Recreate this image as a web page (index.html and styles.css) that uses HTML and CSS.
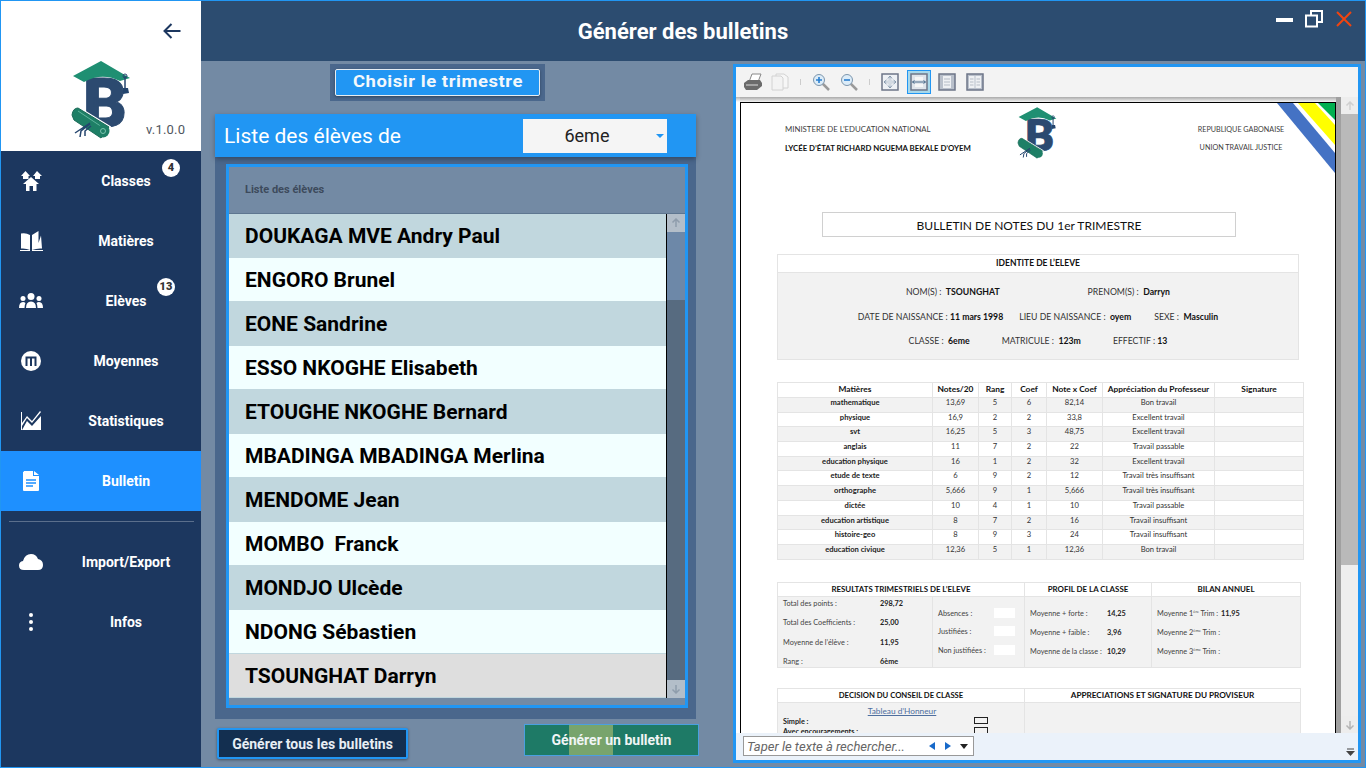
FILE: index.html
```html
<!DOCTYPE html>
<html>
<head>
  <title>Générer des bulletins</title>
  <meta charset="utf-8">
  <link rel="stylesheet" href="styles.css">
</head>
<body>
  <div class="app">
    <aside class="sidebar">
      <div class="brand">
        <svg class="back" width="18" height="16" viewBox="0 0 18 16"><path d="M17.5 8 H2 M8.500 1 L1.500 8 L8.500 15" fill="none" stroke="#1c375f" stroke-width="2"/></svg>
        <div class="brand-row">
          <svg class="brand-logo" width="80" height="90" viewBox="0 0 80 90">
            <text x="23" y="72" class="logo-b">B</text>
            <path d="M41 6 L13 21 L24 27 Q42 17 60 26 L70 23 Z" fill="#1f8f72"/>
            <path d="M65 21 V33" stroke="#24456e" stroke-width="1.5"/>
            <circle cx="65" cy="21" r="2" fill="none" stroke="#24456e"/>
            <path d="M63 33 H68 L69 38 L63 39 Z" fill="#24456e"/>
            <path d="M12 60 Q13 53 18 53 L49 72 L41 83 L14 65 Z" fill="#fff" stroke="#fff" stroke-width="3"/>
            <path d="M12 60 Q13 53 18 53 L49 72 L41 83 L14 65 Z" fill="#1e7f66" stroke="#1a6a58"/>
            <path d="M18 56 L42 72" stroke="#5fb59c"/>
            <circle cx="43" cy="76" r="6.500" fill="#1e7f66"/>
            <circle cx="43" cy="76" r="2.500" fill="none" stroke="#7cc4ae"/>
            <path d="M30 68 L15 78 M30 69 L21 76 L20 82 M31 71 L25 76 L25 81" stroke="#24456e" stroke-width="1.5" fill="none"/>
          </svg>
          <span class="version">v.1.0.0</span>
        </div>
      </div>

      <nav class="menu">
        <a class="menu-item">
          <svg class="icon" width="26" height="22" viewBox="0 0 26 22"><path d="M7.500 1 L12 6 H10.500 V9 H5 V6 H3 Z M19 1 L24 6 H22 V9 H17 V6 H15 Z M13 7 L21 14 H18.500 V21 H15 V16 H11.500 V21 H8 V14 H5 Z" fill="#fff"/></svg>
          <span>Classes</span><b class="badge badge-one">4</b>
        </a>
        <a class="menu-item">
          <svg class="icon" width="26" height="22" viewBox="0 0 26 22"><path d="M3 3.500 Q8 2.500 12 5 V20 Q8 18 3 18.500 Z M14 5 L20.500 1 V13 L23 5.500 L24 18.500 Q19 18 14 20 Z M2 20 H12 V21 H2 Z M14 20 H25 V21 H14 Z" fill="#fff"/></svg>
          <span>Matières</span>
        </a>
        <a class="menu-item">
          <svg class="icon" width="26" height="16" viewBox="0 0 26 16"><circle cx="13" cy="3.500" r="3.500" fill="#fff"/><circle cx="5" cy="5.500" r="2.500" fill="#fff"/><circle cx="21" cy="5.500" r="2.500" fill="#fff"/><path d="M8 15 Q8 8.500 13 8.500 Q18 8.500 18 15 Z M1 15 Q1 9 5 9 Q6.500 9 7.500 10 Q6.500 12 6.500 15 Z M25 15 Q25 9 21 9 Q19.500 9 18.500 10 Q19.500 12 19.500 15 Z" fill="#fff"/></svg>
          <span>Elèves</span><b class="badge badge-two">13</b>
        </a>
        <a class="menu-item">
          <svg class="icon" width="26" height="22" viewBox="0 0 26 22"><circle cx="13" cy="11" r="10" fill="#fff"/><path d="M8.500 16 V7.500 H17.500 V16 M13 8 V16" fill="none" stroke="#1c375f" stroke-width="2"/></svg>
          <span>Moyennes</span>
        </a>
        <a class="menu-item">
          <svg class="icon" width="26" height="22" viewBox="0 0 26 22"><path d="M3 20 V2 H4 V13 L9 6 L14 11 L22 1 L23 2 L14 13 L9 8 L4 16 V20 Z" fill="#fff"/><path d="M4 20 L9 11 L14 16 L23 6 V20 Z" fill="#fff"/></svg>
          <span>Statistiques</span>
        </a>
        <a class="menu-item is-active">
          <svg class="icon" width="26" height="22" viewBox="0 0 26 22"><path d="M6 2 Q5 1 6 1 H15 V6 H21 V20 Q21 21 20 21 H6 Q5 21 5 20 V2 Z M16 1 L21 5 H16 Z" fill="#fff"/><path d="M8 10 H18 M8 13 H18 M8 16 H15" stroke="#1e90ff" stroke-width="1.600"/></svg>
          <span>Bulletin</span>
        </a>
      </nav>

      <hr class="menu-sep">

      <nav class="menu">
        <a class="menu-item">
          <svg class="icon" width="26" height="18" viewBox="0 0 26 18"><path d="M6 17 Q1 17 1 12.500 Q1 8.500 5 8 Q7 1 13 1 Q18 1 20 6 Q25 7 25 12 Q25 17 20 17 Z" fill="#fff"/></svg>
          <span>Import/Export</span>
        </a>
        <a class="menu-item">
          <svg class="icon" width="26" height="22" viewBox="0 0 26 22"><circle cx="13" cy="4" r="2" fill="#fff"/><circle cx="13" cy="11" r="2" fill="#fff"/><circle cx="13" cy="18" r="2" fill="#fff"/></svg>
          <span>Infos</span>
        </a>
      </nav>
    </aside>

    <div class="main">
      <header class="topbar">
        <h1>Générer des bulletins</h1>
        <div class="win-controls">
          <svg width="17" height="4"><rect width="17" height="4" fill="#fff"/></svg>
          <svg width="18" height="18" viewBox="0 0 18 18"><path d="M6 5 V1 H17 V12 H12.500" fill="none" stroke="#fff" stroke-width="2"/><rect x="1" y="5.500" width="11" height="11" fill="none" stroke="#fff" stroke-width="2"/></svg>
          <svg width="16" height="16" viewBox="0 0 16 16"><path d="M1 1 L15 15 M15 1 L1 15" stroke="#f0440f" stroke-width="2"/></svg>
        </div>
      </header>

      <div class="content">
        <section class="students">
          <div class="term-wrap"><button class="term-btn"><span>Choisir le trimestre</span></button></div>

          <div class="list-head">
            <span>Liste des élèves de</span>
            <div class="class-select">6eme<i class="caret"></i></div>
          </div>

          <div class="list-panel">
            <div class="list-box">
              <div class="list-title">Liste des élèves</div>
              <div class="list-body">
                <ul class="rows">
                  <li>DOUKAGA MVE Andry Paul</li>
                  <li>ENGORO Brunel</li>
                  <li>EONE Sandrine</li>
                  <li>ESSO NKOGHE Elisabeth</li>
                  <li>ETOUGHE NKOGHE Bernard</li>
                  <li>MBADINGA MBADINGA Merlina</li>
                  <li>MENDOME Jean</li>
                  <li>MOMBO&nbsp; Franck</li>
                  <li>MONDJO Ulcède</li>
                  <li>NDONG Sébastien</li>
                  <li class="is-selected">TSOUNGHAT Darryn</li>
                </ul>
                <div class="list-scroll">
                  <div class="scroll-btn"><svg width="10" height="10" viewBox="0 0 10 10"><path d="M5 9 V1 M1.500 4.500 L5 1 L8.500 4.500" fill="none" stroke="#8f9dac" stroke-width="1.500"/></svg></div>
                  <div class="list-thumb"></div>
                  <div class="list-track"></div>
                  <div class="scroll-btn"><svg width="10" height="10" viewBox="0 0 10 10"><path d="M5 1 V9 M1.500 5.500 L5 9 L8.500 5.500" fill="none" stroke="#8f9dac" stroke-width="1.500"/></svg></div>
                </div>
              </div>
            </div>
          </div>

          <div class="actions">
            <button class="btn-all">Générer tous les bulletins</button>
            <button class="btn-one">Générer un bulletin</button>
          </div>
        </section>

        <section class="viewer">
          <div class="toolbar">
            <svg class="tool t-print" width="20" height="18" viewBox="0 0 20 18"><path d="M9 1 L18 1 L15 9 H6 Z" fill="#fff" stroke="#888"/><path d="M1 10 L5 7 H17 L19 10 V13 L14 17 H3 L1 14 Z" fill="#6b6b6b"/><path d="M3 12 H15" stroke="#ddd"/></svg>
            <svg class="tool t-copy" width="18" height="18" viewBox="0 0 18 18"><path d="M5 1 H13 L17 4 V15 H5 Z" fill="#f6f6f6" stroke="#d2d2d2"/><path d="M1 3 H10 L12 5 V17 H1 Z" fill="#f3f3f3" stroke="#d2d2d2"/></svg>
            <i class="tool-sep"></i>
            <svg class="tool t-zoomin" width="18" height="18" viewBox="0 0 18 18"><path d="M10 10 L17 17" stroke="#9a9a9a" stroke-width="2.500"/><circle cx="7" cy="7" r="5.500" fill="#dcecf8" stroke="#7d96ad"/><path d="M4 7 H10 M7 4 V10" stroke="#2a7fd0" stroke-width="1.600"/></svg>
            <svg class="tool t-zoomout" width="18" height="18" viewBox="0 0 18 18"><path d="M10 10 L17 17" stroke="#9a9a9a" stroke-width="2.500"/><circle cx="7" cy="7" r="5.500" fill="#dcecf8" stroke="#7d96ad"/><path d="M4 7 H10" stroke="#2a7fd0" stroke-width="1.600"/></svg>
            <i class="tool-sep"></i>
            <svg class="tool t-fit" width="18" height="18" viewBox="0 0 18 18"><rect x="1" y="1" width="16" height="16" fill="#eef1f5" stroke="#6d7588" stroke-width="1.500"/><path d="M9 3.500 V14.500 M3.500 9 H14.500" stroke="#a9b8c8"/><path d="M7 5.500 L9 3 L11 5.500 M7 12.500 L9 15 L11 12.500 M5.500 7 L3 9 L5.500 11 M12.500 7 L15 9 L12.500 11" fill="none" stroke="#7f93a8"/><rect x="6.500" y="6.500" width="5" height="5" fill="#d3dae2"/></svg>
            <span class="tool-on"><svg width="18" height="18" viewBox="0 0 18 18"><rect x="1" y="1" width="16" height="16" fill="#dfe4ea" stroke="#6d7588" stroke-width="1.500"/><path d="M5 5.500 H13 M5 12.500 H13" stroke="#f6f6f6" stroke-width="3"/><path d="M2.500 9 H15.500 M4.500 7.500 L2.500 9 L4.500 10.500 M13.500 7.500 L15.500 9 L13.500 10.500" fill="none" stroke="#4a6a8a"/></svg></span>
            <svg class="tool t-page" width="18" height="18" viewBox="0 0 18 18"><rect x="1" y="1" width="16" height="16" fill="#b9c0cb" stroke="#6d7588" stroke-width="1.500"/><rect x="5" y="3" width="8" height="12" fill="#eef0f3"/><path d="M6 6 H12 M6 9 H12 M6 12 H12" stroke="#b5bcc6"/></svg>
            <svg class="tool t-two" width="18" height="18" viewBox="0 0 18 18"><rect x="1" y="1" width="16" height="16" fill="#b9c0cb" stroke="#6d7588" stroke-width="1.500"/><rect x="3" y="3" width="5.500" height="12" fill="#eef0f3"/><rect x="9.500" y="3" width="5.500" height="12" fill="#eef0f3"/><path d="M4 6 H7.500 M4 9 H7.500 M4 12 H7.500 M10.500 6 H14 M10.500 9 H14 M10.500 12 H14" stroke="#b5bcc6"/></svg>
          </div>

          <div class="doc-area">
            <div class="doc-gutter"></div>
            <div class="page">
              <svg class="flag" width="59" height="70" viewBox="0 0 59 70"><path d="M1 0 H17 L59 50 V70 Z" fill="#4472c4"/><path d="M22 0 H39 L59 22 V42 Z" fill="#ffff00"/><path d="M42 0 H59 V17 Z" fill="#00b050"/></svg>

              <div class="doc-head">
                <div class="head-left">
                  <p>MINISTERE DE L’EDUCATION NATIONAL</p>
                  <p class="strong">LYCÉE D’ÉTAT RICHARD NGUEMA BEKALE D’OYEM</p>
                </div>
                <svg class="head-logo" width="53" height="60" viewBox="0 0 80 90">
                  <text x="23" y="72" class="logo-b">B</text>
                  <path d="M41 6 L13 21 L24 27 Q42 17 60 26 L70 23 Z" fill="#1f8f72"/>
                  <path d="M65 21 V33" stroke="#24456e" stroke-width="1.5"/>
                  <circle cx="65" cy="21" r="2" fill="none" stroke="#24456e"/>
                  <path d="M63 33 H68 L69 38 L63 39 Z" fill="#24456e"/>
                  <path d="M12 60 Q13 53 18 53 L49 72 L41 83 L14 65 Z" fill="#fff" stroke="#fff" stroke-width="3"/>
                  <path d="M12 60 Q13 53 18 53 L49 72 L41 83 L14 65 Z" fill="#1e7f66" stroke="#1a6a58"/>
                  <circle cx="43" cy="76" r="6.500" fill="#1e7f66"/>
                  <path d="M30 68 L15 78 M30 69 L21 76 L20 82 M31 71 L25 76 L25 81" stroke="#24456e" stroke-width="1.5" fill="none"/>
                </svg>
                <div class="head-right">
                  <p>REPUBLIQUE GABONAISE</p>
                  <p>UNION TRAVAIL JUSTICE</p>
                </div>
              </div>

              <div class="doc-title">BULLETIN DE NOTES DU 1er TRIMESTRE</div>

              <div class="identity">
                <div class="sheet-head">IDENTITE DE L’ELEVE</div>
                <div class="identity-body">
                  <div class="id-row gap-a"><span>NOM(S) :&nbsp; <b>TSOUNGHAT</b></span><span>PRENOM(S) :&nbsp; <b>Darryn</b></span></div>
                  <div class="id-row gap-b"><span>DATE DE NAISSANCE : <b>11 mars 1998</b></span><span>LIEU DE NAISSANCE :&nbsp; <b>oyem</b></span><span>SEXE :&nbsp; <b>Masculin</b></span></div>
                  <div class="id-row gap-c"><span>CLASSE :&nbsp; <b>6eme</b></span><span>MATRICULE :&nbsp; <b>123m</b></span><span>EFFECTIF : <b>13</b></span></div>
                </div>
              </div>

              <table class="marks">
                <colgroup><col class="c1"><col class="c2"><col class="c3"><col class="c4"><col class="c5"><col class="c6"><col class="c7"></colgroup>
                <tr><th>Matières</th><th>Notes/20</th><th>Rang</th><th>Coef</th><th>Note x Coef</th><th>Appréciation du Professeur</th><th>Signature</th></tr>
                <tr><td class="subject">mathematique</td><td>13,69</td><td>5</td><td>6</td><td>82,14</td><td>Bon travail</td><td></td></tr>
                <tr><td class="subject">physique</td><td>16,9</td><td>2</td><td>2</td><td>33,8</td><td>Excellent travail</td><td></td></tr>
                <tr><td class="subject">svt</td><td>16,25</td><td>5</td><td>3</td><td>48,75</td><td>Excellent travail</td><td></td></tr>
                <tr><td class="subject">anglais</td><td>11</td><td>7</td><td>2</td><td>22</td><td>Travail passable</td><td></td></tr>
                <tr><td class="subject">education physique</td><td>16</td><td>1</td><td>2</td><td>32</td><td>Excellent travail</td><td></td></tr>
                <tr><td class="subject">etude de texte</td><td>6</td><td>9</td><td>2</td><td>12</td><td>Travail très insuffisant</td><td></td></tr>
                <tr><td class="subject">orthographe</td><td>5,666</td><td>9</td><td>1</td><td>5,666</td><td>Travail très insuffisant</td><td></td></tr>
                <tr><td class="subject">dictée</td><td>10</td><td>4</td><td>1</td><td>10</td><td>Travail passable</td><td></td></tr>
                <tr><td class="subject">education artistique</td><td>8</td><td>7</td><td>2</td><td>16</td><td>Travail insuffisant</td><td></td></tr>
                <tr><td class="subject">histoire-geo</td><td>8</td><td>9</td><td>3</td><td>24</td><td>Travail insuffisant</td><td></td></tr>
                <tr><td class="subject">education civique</td><td>12,36</td><td>5</td><td>1</td><td>12,36</td><td>Bon travail</td><td></td></tr>
              </table>

              <div class="results">
                <div class="res-head span-2">RESULTATS TRIMESTRIELS DE L’ELEVE</div>
                <div class="res-head">PROFIL DE LA CLASSE</div>
                <div class="res-head">BILAN ANNUEL</div>
                <div class="res-cell points">
                  <div class="kv"><span>Total des points :</span><b>298,72</b></div>
                  <div class="kv"><span>Total des Coefficients :</span><b>25,00</b></div>
                  <div class="kv"><span>Moyenne de l’élève :</span><b>11,95</b></div>
                  <div class="kv"><span>Rang :</span><b>6ème</b></div>
                </div>
                <div class="res-cell absences">
                  <div class="abs"><span>Absences :</span><i></i></div>
                  <div class="abs"><span>Justifiées :</span><i></i></div>
                  <div class="abs"><span>Non justifiées :</span><i></i></div>
                </div>
                <div class="res-cell profile">
                  <div class="kv"><span>Moyenne + forte :</span><b>14,25</b></div>
                  <div class="kv"><span>Moyenne + faible :</span><b>3,96</b></div>
                  <div class="kv"><span>Moyenne de la classe :</span><b>10,29</b></div>
                </div>
                <div class="res-cell annual">
                  <div class="kv"><span>Moyenne 1<sup>ère</sup> Trim :</span><b>11,95</b></div>
                  <div class="kv"><span>Moyenne 2<sup>ème</sup> Trim :</span></div>
                  <div class="kv"><span>Moyenne 3<sup>ème</sup> Trim :</span></div>
                </div>
              </div>

              <div class="decision">
                <div class="res-head">DECISION DU CONSEIL DE CLASSE</div>
                <div class="res-head">APPRECIATIONS ET SIGNATURE DU PROVISEUR</div>
                <div class="res-cell dec-left">
                  <div class="honour">Tableau d’Honneur</div>
                  <div class="dec-row"><b>Simple :</b><i></i></div>
                  <div class="dec-row"><b>Avec encouragements :</b><i></i></div>
                </div>
                <div class="res-cell"></div>
              </div>
            </div>
            <div class="doc-shadow"></div>
            <div class="doc-scroll">
              <div class="doc-scroll-btn"><svg width="10" height="10" viewBox="0 0 10 10"><path d="M5 9 V1 M1.500 4.500 L5 1 L8.500 4.500" fill="none" stroke="#cfcfcf" stroke-width="1.500"/></svg></div>
              <div class="doc-thumb"></div>
              <div class="doc-track"></div>
              <div class="doc-scroll-btn"><svg width="10" height="10" viewBox="0 0 10 10"><path d="M5 1 V9 M1.500 5.500 L5 9 L8.500 5.500" fill="none" stroke="#b5b5b5" stroke-width="1.500"/></svg></div>
            </div>
          </div>

          <div class="searchbar">
            <div class="search">
              <span class="search-text">Taper le texte à rechercher...</span>
              <i class="tri tri-left"></i>
              <i class="tri tri-right"></i>
              <i class="tri tri-down"></i>
            </div>
            <svg class="search-more" width="9" height="8" viewBox="0 0 9 8"><path d="M1 1 H8" stroke="#444"/><path d="M0 3 H9 L4.500 8 Z" fill="#444"/></svg>
          </div>
        </section>
      </div>
    </div>
  </div>
</body>
</html>
```

FILE: styles.css
```css
* {
  box-sizing: border-box;
}
html, body {
  margin: 0;
  height: 100%;
  overflow: hidden;
}
body {
  font-family: Roboto, sans-serif;
}
p, ul, h1 {
  margin: 0;
  padding: 0;
}
button {
  font-family: Roboto, sans-serif;
  padding: 0;
  cursor: pointer;
}
.logo-b {
  font-family: Roboto, sans-serif;
  font-weight: 900;
  font-size: 68px;
  fill: #2c4a70;
  stroke: #2c4a70;
  stroke-width: 1;
}

.app {
  display: flex;
  width: 1366px;
  height: 768px;
  border: 1px solid #2196f3;
  background-color: #738aa4;
}

/* sidebar */
.sidebar {
  width: 200px;
  flex: none;
  background-color: #1c375f;
}
.brand {
  height: 150px;
  background-color: white;
  padding-top: 22px;
  display: flex;
  flex-direction: column;
}
.back {
  flex: none;
  align-self: flex-end;
  margin-right: 20px;
}
.brand-row {
  display: flex;
  flex: none;
  margin-top: 16px;
  padding-left: 59px;
  height: 90px;
}
.brand-logo {
  flex: none;
}
.version {
  font-size: 13px;
  letter-spacing: 0.2px;
  color: #50565e;
  margin-left: 6px;
  margin-top: 67px;
}
.menu-item {
  position: relative;
  display: flex;
  align-items: center;
  height: 60px;
  color: white;
  font-size: 14px;
  font-weight: 700;
}
.menu-item .icon {
  flex: none;
  margin-left: 17px;
  margin-right: 7px;
  width: 26px;
}
.menu-item span {
  width: 150px;
  text-align: center;
}
.is-active {
  background-color: #1e90ff;
}
.badge {
  position: absolute;
  width: 18px;
  height: 18px;
  border-radius: 50%;
  background-color: white;
  color: #333;
  font-size: 11px;
  line-height: 18px;
  text-align: center;
}
.badge-one {
  left: 161px;
  top: 8px;
}
.badge-two {
  left: 156px;
  top: 7px;
}
.menu-sep {
  border: none;
  border-top: 1px solid #5b6f8c;
  margin: 10px 7px 10px 8px;
}

/* top bar */
.main {
  flex: 1;
  display: flex;
  flex-direction: column;
  min-width: 0;
}
.topbar {
  height: 60px;
  flex: none;
  display: flex;
  background-color: #2c4c70;
}
.topbar h1 {
  width: 964px;
  color: white;
  font-size: 22px;
  font-weight: 700;
  text-align: center;
  line-height: 61px;
}
.win-controls {
  display: flex;
  align-items: flex-start;
  margin-left: 111px;
}
.win-controls svg:nth-child(1) {
  margin-top: 17px;
}
.win-controls svg:nth-child(2) {
  margin-top: 9px;
  margin-left: 12px;
}
.win-controls svg:nth-child(3) {
  margin-top: 10px;
  margin-left: 13px;
}

/* left part */
.content {
  flex: 1;
  display: flex;
  min-height: 0;
}
.students {
  width: 481px;
  margin-left: 14px;
  flex: none;
}
.term-wrap {
  width: 215px;
  height: 37px;
  margin: 3px 0 13px 115px;
  padding: 5px;
  background-color: #4a678c;
}
.term-btn {
  display: block;
  width: 100%;
  height: 100%;
  padding-bottom: 2px;
  background-color: #2196f3;
  border: 1px solid #e6edf3;
  border-radius: 2px;
  color: #f4f8fb;
  font-size: 16px;
  font-weight: 700;
  letter-spacing: 0.5px;
  box-shadow: 0 1px 3px rgba(0,0,0,0.35);
}
.term-btn span {
  display: inline-block;
  transform: scaleX(1.15);
}
.list-head {
  position: relative;
  display: flex;
  align-items: center;
  height: 43px;
  padding-left: 9px;
  background-color: #2196f3;
  color: white;
  font-size: 21px;
  box-shadow: 0 2px 5px rgba(0,0,0,0.3);
}
.class-select {
  position: relative;
  margin-left: 122px;
  width: 144px;
  height: 34px;
  background-color: #f5f5f5;
  color: #222;
  font-size: 18px;
  line-height: 33px;
  text-align: center;
  padding-right: 16px;
}
.caret {
  position: absolute;
  right: 3px;
  top: 15px;
  border: 4px solid transparent;
  border-top: 4px solid #2196f3;
}
.list-panel {
  height: 562px;
  padding: 7px 8px 0 11px;
  background-color: #4a678c;
}
.list-box {
  height: 544px;
  border: 3px solid #2196f3;
  background-color: #738aa4;
}
.list-title {
  height: 47px;
  padding: 16px 0 0 16px;
  font-size: 11px;
  font-weight: 700;
  color: #3d4a5c;
  border-bottom: 1px solid #5e7690;
}
.list-body {
  display: flex;
  height: 484px;
}
.rows {
  width: 438px;
  list-style: none;
  border-right: 1px solid black;
}
.rows li {
  height: 44px;
  padding-left: 16px;
  line-height: 44px;
  font-size: 21px;
  font-weight: 700;
  color: black;
  background-color: #f2ffff;
  border-bottom: 1px solid #c1d7de;
}
.rows li:nth-child(odd) {
  background-color: #c1d7de;
}
.rows li.is-selected {
  background-color: #dedede;
}
.list-scroll {
  width: 18px;
  display: flex;
  flex-direction: column;
}
.scroll-btn {
  height: 18px;
  flex: none;
  display: flex;
  align-items: center;
  justify-content: center;
  background-color: #b3bec9;
}
.list-thumb {
  height: 68px;
  background-color: #6d88a8;
}
.list-track {
  flex: 1;
  background-color: #576b80;
}
.actions {
  display: flex;
  justify-content: space-between;
  align-items: flex-start;
  margin: 0 -3px 0 2px;
}
.btn-all {
  width: 191px;
  height: 31px;
  margin-top: 9px;
  background-color: #132f50;
  border: 2px solid #2196f3;
  border-radius: 2px;
  color: #e8eef4;
  font-size: 14px;
  font-weight: 700;
  box-shadow: 0 1px 3px rgba(0,0,0,0.4);
}
.btn-one {
  width: 175px;
  height: 32px;
  margin-top: 5px;
  background: linear-gradient(to right, #1e7a66 44px, #78a46c 44px, #78a46c 88px, #1e7a66 88px);
  border: 1px solid #4aa0e0;
  color: #f0f5f5;
  font-size: 14px;
  font-weight: 700;
}

/* viewer */
.viewer {
  width: 628px;
  height: 699px;
  margin: 3px 0 0 37px;
  flex: none;
  display: flex;
  flex-direction: column;
  border: 3px solid #2196f3;
  background-color: #ebf2fa;
}
.toolbar {
  height: 30px;
  flex: none;
  display: flex;
  align-items: center;
  background-color: #f3f3f3;
}
.tool {
  flex: none;
}
.t-print { margin-left: 7px; margin-top: 0; }
.t-copy { margin-left: 8px; }
.tool-sep {
  width: 1px;
  height: 6px;
  background-color: #ccc;
}
.t-copy + .tool-sep { margin-left: 11px; }
.t-zoomin { margin-left: 11px; }
.t-zoomout { margin-left: 10px; }
.t-zoomout + .tool-sep { margin-left: 11px; }
.t-fit { margin-left: 11px; }
.tool-on {
  width: 24px;
  height: 24px;
  margin-left: 8px;
  display: flex;
  align-items: center;
  justify-content: center;
  border: 1px solid #2196f3;
  background-color: #a8d8ea;
}
.t-page { margin-left: 7px; }
.t-two { margin-left: 10px; }
.doc-area {
  flex: 1;
  min-height: 0;
  display: flex;
}
.doc-gutter {
  width: 4px;
  flex: none;
  background: linear-gradient(#b5b5b5, white 5px);
}
.page {
  position: relative;
  width: 596px;
  flex: none;
  margin-top: 5px;
  overflow: hidden;
  background-color: white;
  border: solid black;
  border-width: 1px 1px 0 1px;
  font-family: Lato, sans-serif;
  color: #222;
}
.toolbar + .doc-area {
  background: linear-gradient(#aaa, #f3f3f3 5px);
  background-size: 100% 5px;
  background-repeat: no-repeat;
}
.flag {
  position: absolute;
  right: 0;
  top: 0;
}
.doc-head {
  display: flex;
  height: 109px;
}
.head-left {
  width: 269px;
  padding: 22px 0 0 44px;
  font-size: 7.800px;
  line-height: 9px;
}
.head-left p {
  margin-bottom: 10px;
  color: #3d3d3d;
}
.head-left .strong {
  font-weight: 700;
  color: #111;
}
.head-right {
  margin-left: 128px;
  width: 100px;
  padding-top: 22px;
  font-size: 7.200px;
  line-height: 9px;
  text-align: center;
  color: #3d3d3d;
  white-space: nowrap;
}
.head-right p {
  margin-bottom: 9px;
}
.doc-title {
  width: 414px;
  height: 25px;
  margin-left: 81px;
  border: 1px solid #d0d0d0;
  font-size: 12px;
  line-height: 25px;
  text-align: center;
  color: #111;
}
.identity {
  width: 522px;
  margin: 17px 0 0 36px;
  border: 1px solid #e4e4e4;
}
.sheet-head {
  height: 18px;
  font-size: 8.500px;
  font-weight: 700;
  line-height: 17px;
  text-align: center;
  color: #111;
  border-bottom: 1px solid #e4e4e4;
}
.identity-body {
  height: 86px;
  padding-top: 9px;
  background-color: #f2f2f2;
  font-size: 8.700px;
  color: #333;
}
.identity-body b {
  color: #111;
}
.id-row {
  display: flex;
  justify-content: center;
  height: 24.500px;
  line-height: 20px;
}
.gap-a { gap: 88px; }
.gap-b { gap: 16px; }
.gap-b span:last-child { margin-left: 7px; }
.gap-c { gap: 32px; }

.marks {
  width: 526px;
  margin: 22px 0 0 36px;
  border-collapse: collapse;
  table-layout: fixed;
  font-size: 7.600px;
  color: #333;
}
.c1 { width: 155px; }
.c2 { width: 46px; }
.c3 { width: 33px; }
.c4 { width: 35px; }
.c5 { width: 56px; }
.c6 { width: 112px; }
.c7 { width: 89px; }
.marks th, .marks td {
  padding: 0;
  border: 1px solid #e4e4e4;
  text-align: center;
  overflow: hidden;
  white-space: nowrap;
}
.marks th {
  height: 15px;
  font-size: 8.400px;
  font-weight: 700;
  line-height: 12px;
  vertical-align: top;
  color: #111;
}
.marks td {
  height: 14.700px;
  line-height: 8px;
  vertical-align: top;
}
.marks tr:nth-child(even) td {
  background-color: #f2f2f2;
}
.marks .subject {
  font-weight: 700;
  color: #222;
}

.results, .decision {
  display: grid;
  width: 524px;
  margin-left: 36px;
  border: solid #e4e4e4;
  border-width: 1px 1px 0 1px;
}
.results {
  grid-template-columns: 154px 92px 127px 149px;
  grid-template-rows: 14px 70px;
  margin-top: 22px;
  border-bottom-width: 1px;
}
.decision {
  grid-template-columns: 246px 276px;
  grid-template-rows: 14px 60px;
  margin-top: 20px;
}
.span-2 {
  grid-column: span 2;
}
.res-head {
  font-size: 7.900px;
  font-weight: 700;
  line-height: 13px;
  text-align: center;
  color: #111;
  border-left: 1px solid #e4e4e4;
  border-bottom: 1px solid #e4e4e4;
  white-space: nowrap;
}
.res-head:first-child {
  border-left: none;
}
.decision .res-head:first-child {
  font-size: 7.700px;
}
.decision .res-head:nth-child(2) {
  font-size: 8.200px;
}
.res-cell {
  background-color: #f2f2f2;
  border-left: 1px solid #e4e4e4;
  font-size: 7.300px;
  color: #444;
}
.res-cell b {
  color: #222;
}
.kv {
  display: flex;
  line-height: 9px;
  white-space: nowrap;
}
.points {
  border-left: none;
  padding: 2px 0 0 5px;
}
.points .kv {
  height: 19.500px;
}
.points .kv span { width: 97px; }
.profile, .annual {
  padding: 12px 0 0 5px;
}
.profile .kv, .annual .kv {
  height: 19px;
}
.profile .kv span { width: 77px; }
.annual .kv span { width: 64px; }
.annual sup {
  font-size: 4px;
  line-height: 0;
}
.absences {
  padding: 11px 0 0 5px;
}
.abs {
  display: flex;
  height: 18.500px;
  line-height: 11px;
}
.abs span { width: 56px; }
.abs i {
  width: 21px;
  height: 10px;
  background-color: white;
}
.dec-left {
  border-left: none;
  padding: 3px 0 0 5px;
}
.honour {
  width: 238px;
  font-size: 8.300px;
  line-height: 10px;
  text-align: center;
  text-decoration: underline;
  color: #4f6f9f;
  margin-bottom: 1px;
}
.dec-row {
  display: flex;
  justify-content: space-between;
  width: 205px;
  height: 10.500px;
  color: #111;
  line-height: 10px;
}
.dec-row i {
  width: 14px;
  height: 7px;
  border: 1px solid #222;
}

.doc-shadow {
  width: 5px;
  flex: none;
  background-color: #a0a0a0;
}
.doc-scroll {
  width: 17px;
  flex: none;
  display: flex;
  flex-direction: column;
  background-color: #eee;
}
.doc-scroll-btn {
  height: 17px;
  flex: none;
  display: flex;
  align-items: center;
  justify-content: center;
  background-color: #ededed;
}
.doc-thumb {
  height: 451px;
  background-color: #b9b9b9;
}
.doc-track {
  flex: 1;
}
.searchbar {
  height: 27px;
  flex: none;
  position: relative;
  padding: 3px 0 0 7px;
  background-color: #ebf2fa;
}
.search {
  display: flex;
  align-items: center;
  width: 231px;
  height: 20px;
  background-color: white;
  border: 1px solid #999;
  padding-left: 3px;
}
.search-text {
  width: 180px;
  font-size: 13px;
  font-style: italic;
  color: #666;
}
.tri {
  width: 0;
  height: 0;
  border: 4px solid transparent;
}
.tri-left {
  border-left: none;
  border-right: 6px solid #1769c9;
  margin-left: 2px;
}
.tri-right {
  border-right: none;
  border-left: 6px solid #1769c9;
  margin-left: 10px;
}
.tri-down {
  border-bottom: none;
  border-top: 5px solid #222;
  margin-left: 9px;
}
.search-more {
  position: absolute;
  right: 3px;
  bottom: 4px;
}
```
